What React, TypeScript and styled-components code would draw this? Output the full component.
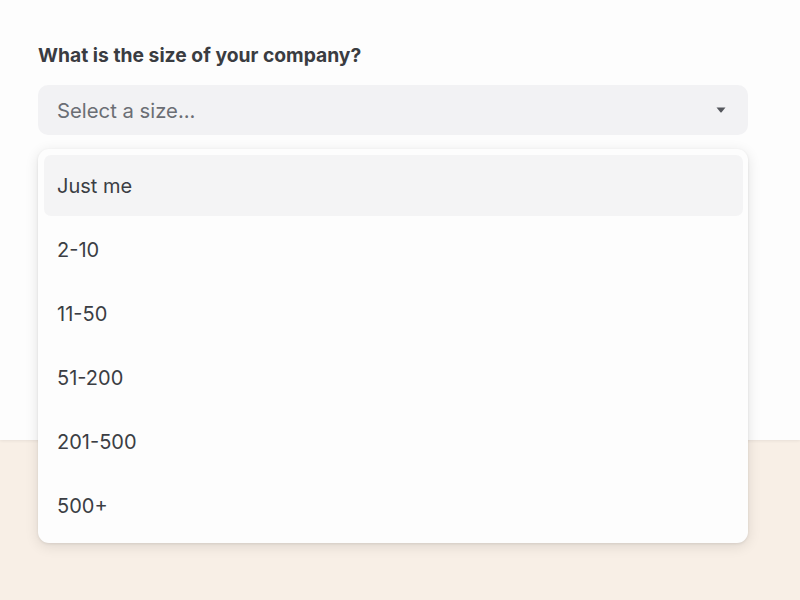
import styled, { createGlobalStyle } from "styled-components";

const sizes = ["Just me", "2-10", "11-50", "51-200", "201-500", "500+"];

const GlobalStyle = createGlobalStyle`
  html, body {
    margin: 0;
    padding: 0;
    background: #f8efe6;
    font-family: Inter, "Noto Sans", sans-serif;
  }
`;

export default function App() {
  return (
    <>
      <GlobalStyle />
      <Page>
        <Card>
          <Label>What is the size of your company?</Label>
          <Field>
            <Trigger>
              <Placeholder>Select a size...</Placeholder>
              <Caret viewBox="0 0 10 6" aria-hidden>
                <path d="M0.5 0.5 H9.5 L5.6 5.2 Q5 5.8 4.4 5.2 Z" fill="#55575d" />
              </Caret>
            </Trigger>
            <Menu>
              {sizes.map((size, i) => (
                <Item key={size} $active={i === 0}>
                  {size}
                </Item>
              ))}
            </Menu>
          </Field>
        </Card>
      </Page>
    </>
  );
}

const Page = styled.div`
  min-height: 600px;
  background: #f8efe6;
`;

const Card = styled.div`
  height: 440px;
  box-sizing: border-box;
  padding: 44px 52px 0 38px;
  background: #fdfdfd;
  box-shadow: 0 1px 3px rgba(0, 0, 0, 0.07);
`;

const Label = styled.div`
  font-size: 19.3px;
  font-weight: 700;
  line-height: 22px;
  color: #3a3c41;
  margin-bottom: 19px;
`;

const Field = styled.div`
  position: relative;
`;

const Trigger = styled.div`
  height: 50px;
  box-sizing: border-box;
  display: flex;
  align-items: center;
  justify-content: space-between;
  padding: 0 22px 0 19px;
  background: #f2f2f4;
  border-radius: 10px;
`;

const Placeholder = styled.span`
  font-size: 20.3px;
  color: #6b6e74;
`;

const Caret = styled.svg`
  width: 10px;
  height: 6px;
`;

const Menu = styled.div`
  position: absolute;
  top: 64px;
  left: 0;
  right: 0;
  box-sizing: border-box;
  padding: 6px 5px 7px 6px;
  background: #fdfdfd;
  border-radius: 11px;
  box-shadow: 0 3px 14px rgba(0, 0, 0, 0.11), 0 1px 3px rgba(0, 0, 0, 0.08);
  display: flex;
  flex-direction: column;
  gap: 3px;
`;

const Item = styled.div<{ $active?: boolean }>`
  height: 61px;
  display: flex;
  align-items: center;
  padding-left: 13px;
  border-radius: 7px;
  font-size: 20px;
  color: #3b3e44;
  background: ${(p) => (p.$active ? "#f4f4f5" : "transparent")};
`;
